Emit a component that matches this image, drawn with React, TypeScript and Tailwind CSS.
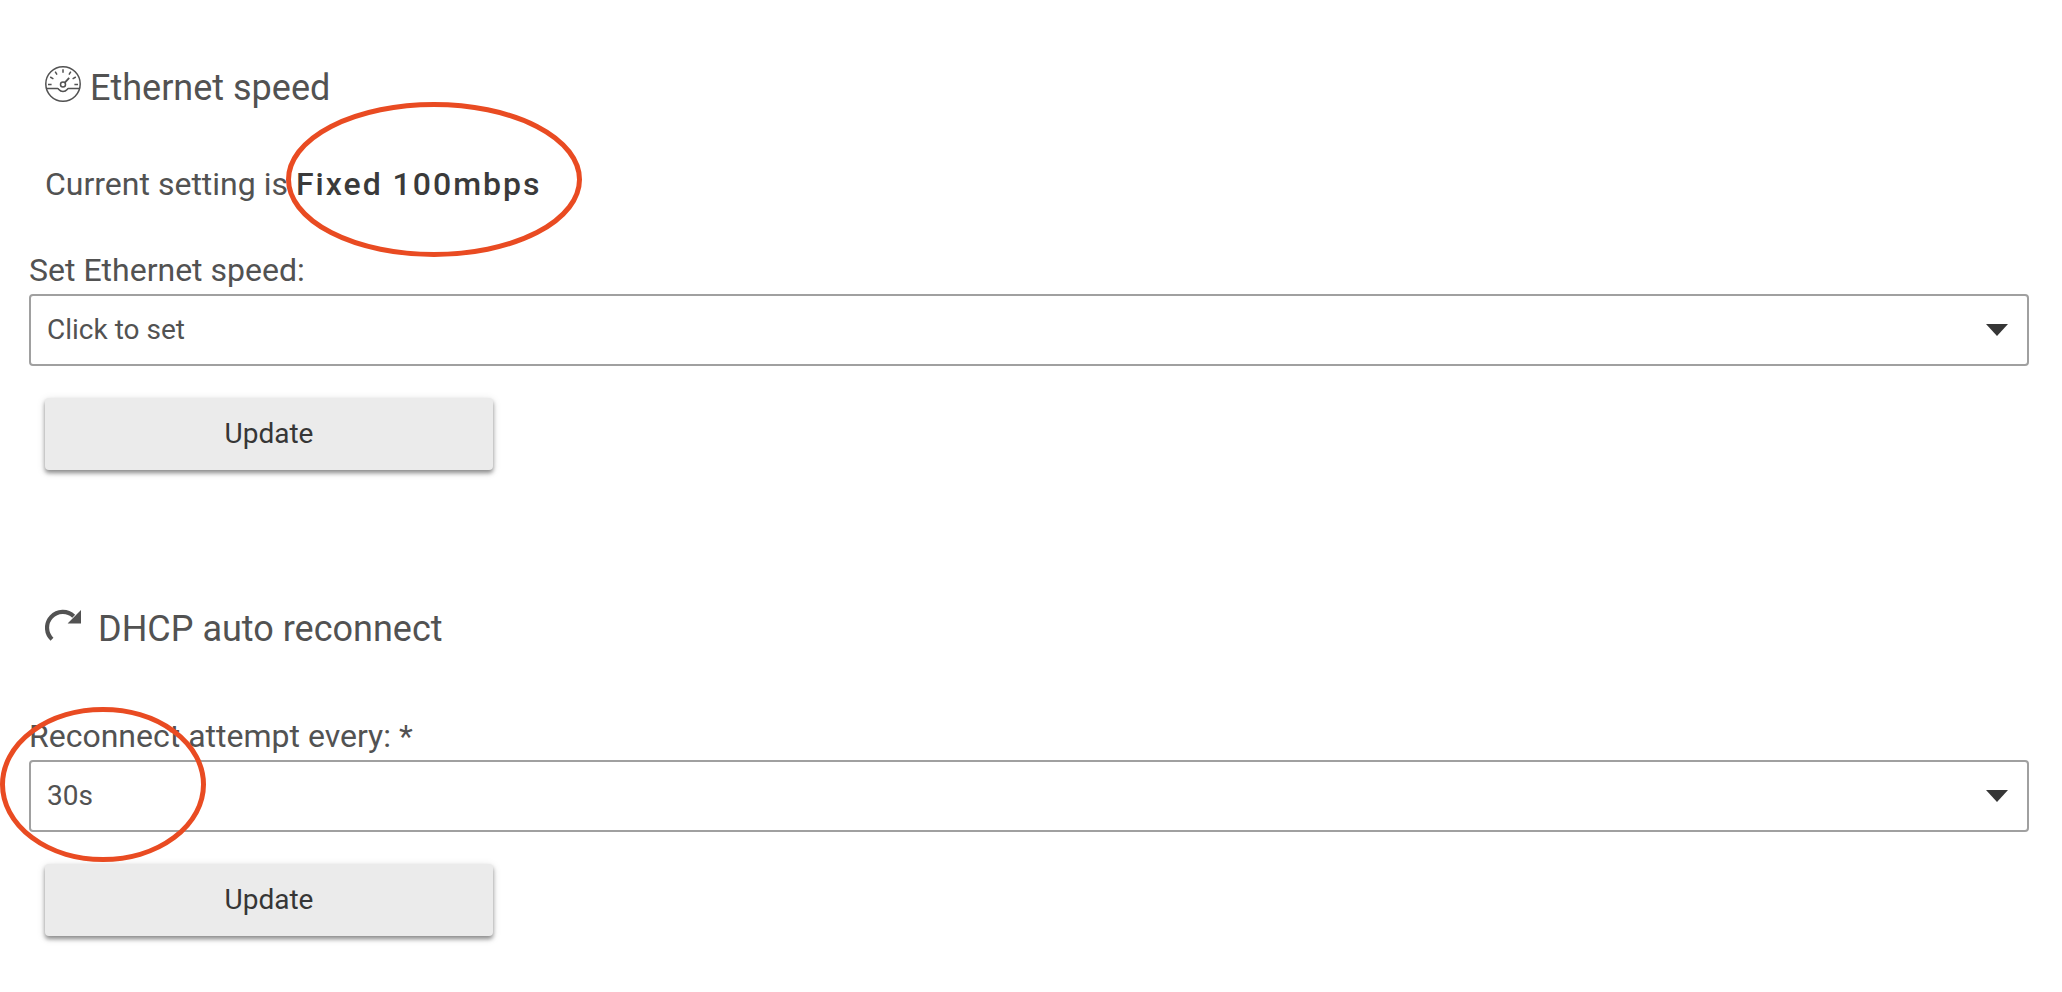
import React, { useState } from 'react';

interface SelectFieldProps {
  id: string;
  label: string;
  options: string[];
  required?: boolean;
}

const GaugeIcon = () => (
  <svg className="h-9 w-9 shrink-0" viewBox="0 0 36 36" fill="none" stroke="currentColor" strokeWidth="1.5" aria-hidden="true">
    <circle cx="18" cy="18" r="17.2" />
    <path d="M1.5 22.5H12.6C14 22.5 14 25.4 18 25.4S22 22.5 23.4 22.5H34.5" />
    <circle cx="18" cy="18.4" r="2.5" />
    <path d="M19.8 16.6L24.2 11.8" strokeWidth="1.8" />
    <path d="M18 3.2V6.8M10.2 5.6L12 8.6M25.8 5.6L24 8.6M5.2 11L8.4 12.9M30.8 11L27.6 12.9M3 18.4H6.6M33 18.4H29.4" />
  </svg>
);

const RedoIcon = () => (
  <svg className="h-9 w-9 shrink-0" viewBox="0 0 36 36" fill="none" aria-hidden="true">
    <path d="M7 32.2A15.6 15.6 0 1 1 28.7 9.2" stroke="currentColor" strokeWidth="4.2" />
    <path d="M36 3V16.4H22.6Z" fill="currentColor" />
  </svg>
);

const SelectField = ({ id, label, options, required }: SelectFieldProps) => {
  const [value, setValue] = useState(options[0]);

  return (
    <div>
      <label htmlFor={id} className="mb-1 block text-[32px] leading-[40px]">
        {label}{required && ' *'}
      </label>
      <div className="relative">
        <select
          id={id}
          value={value}
          onChange={(e) => setValue(e.target.value)}
          className="block h-[72px] w-full appearance-none rounded-[4px] border-2 border-[#a0a0a0] bg-white pr-16 pl-4 text-[28px]"
        >
          {options.map((option) => (
            <option key={option}>{option}</option>
          ))}
        </select>
        <svg className="pointer-events-none absolute top-[30px] right-[21px] h-3 w-[22px]" viewBox="0 0 22 12" aria-hidden="true">
          <path d="M0 0H22L11 12Z" fill="#363636" />
        </svg>
      </div>
    </div>
  );
};

const UpdateButton = () => (
  <button
    type="submit"
    className="mt-8 ml-4 block h-[72px] w-[448px] max-w-full rounded-[4px] bg-[#ebebeb] text-[28px] text-[#363636] shadow-[0_3px_4px_rgba(0,0,0,0.4),0_2px_10px_rgba(0,0,0,0.12)]"
  >
    Update
  </button>
);

// hand-drawn style highlight around a value
const Highlight = ({ className, width }: { className: string; width: number }) => (
  <svg className={`pointer-events-none absolute z-10 h-[155px] ${className}`} viewBox={`0 0 ${width} 155`} fill="none" aria-hidden="true">
    <ellipse cx={width / 2} cy="77.5" rx={width / 2 - 2.5} ry="75" stroke="#e94b22" strokeWidth="5" />
  </svg>
);

const App = () => (
  <main className="bg-white px-[29px] pt-[66px] pb-14 pr-[33px] font-['Roboto',sans-serif] text-[#525252]">
    <form onSubmit={(e) => e.preventDefault()}>
      <h2 className="ml-4 flex items-start gap-[9px] text-[36px] leading-[44px]">
        <GaugeIcon />
        Ethernet speed
      </h2>
      <p className="mt-[50px] mb-[42px] ml-4 text-[32px] leading-[48px]">
        Current setting is{' '}
        <span className="relative inline-block">
          <strong className="font-medium tracking-[2px] text-[#3a3a3a]">Fixed 100mbps</strong>
          <Highlight className="-top-[58px] -left-[10px] w-[296px] max-w-none" width={296} />
        </span>
      </p>
      <SelectField
        id="ethernet-speed"
        label="Set Ethernet speed:"
        options={['Click to set', 'Auto', 'Fixed 100mbps']}
      />
      <UpdateButton />
    </form>

    <form className="mt-[137px]" onSubmit={(e) => e.preventDefault()}>
      <h2 className="ml-4 flex items-start gap-[17px] text-[36px] leading-[44px]">
        <RedoIcon />
        DHCP auto reconnect
      </h2>
      <div className="relative mt-[65px]">
        <SelectField
          id="reconnect-interval"
          label="Reconnect attempt every:"
          options={['30s', '60s', '120s']}
          required
        />
        <Highlight className="-top-[9px] -left-[29px] w-[206px] max-w-none" width={206} />
      </div>
      <UpdateButton />
    </form>
  </main>
);

export default App;
